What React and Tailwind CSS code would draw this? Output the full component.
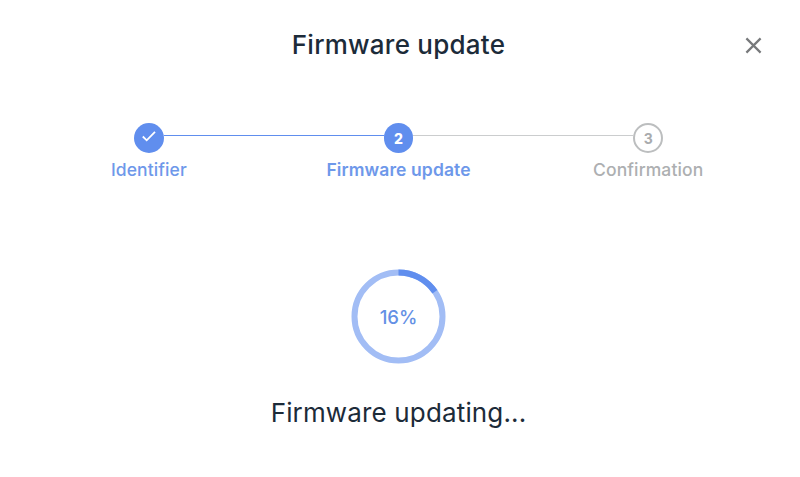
import React from "react";
import { clsx } from "clsx";

const steps = [
  { id: 1, label: "Identifier", status: "done" },
  { id: 2, label: "Firmware update", status: "active" },
  { id: 3, label: "Confirmation", status: "pending" },
];

const progress = 15.5;

function StepLine({ status }) {
  return (
    <div
      className={clsx(
        "-mt-1 h-px flex-1",
        status === "hidden" && "bg-transparent",
        status === "done" && "bg-[#608eee]",
        status === "pending" && "bg-[#cbcdce]"
      )}
    />
  );
}

function Step({ step, before, after }) {
  return (
    <li className="flex flex-1 flex-col items-center">
      <div className="flex w-full items-center">
        <StepLine status={before} />
        <div
          className={clsx(
            "flex size-[29.5px] items-center justify-center rounded-full text-[14px]",
            step.status === "pending"
              ? "border-2 border-[#bcbebf] font-bold text-[#a9abad]"
              : "bg-[#608eee] font-extrabold text-white"
          )}>
          {step.status === "done" ? (
            <svg
              width="16"
              height="14"
              viewBox="0 0 16 14"
              fill="none"
              stroke="currentColor"
              strokeWidth="1.8"
              className="-mt-1">
              <path d="M1.8 7.5L5.7 11.3L14 2.8" />
            </svg>
          ) : (
            <span className="pt-px">{step.id}</span>
          )}
        </div>
        <StepLine status={after} />
      </div>
      <p
        className={clsx(
          "mt-1 whitespace-nowrap text-[17.5px] leading-[26px] tracking-[0.1px]",
          step.status === "done" && "font-medium text-[#6e98ea]",
          step.status === "active" && "font-semibold text-[#6e98ea]",
          step.status === "pending" && "font-medium text-[#adafb1]"
        )}>
        {step.label}
      </p>
    </li>
  );
}

function ProgressRing({ value }) {
  return (
    <div className="grid size-[95px] place-items-center">
      <svg
        viewBox="0 0 95 95"
        fill="none"
        strokeWidth="6"
        className="col-start-1 row-start-1 size-[95px] -rotate-90">
        <circle cx="47.5" cy="47.5" r="44" stroke="#a2bdf5" />
        <circle
          cx="47.5"
          cy="47.5"
          r="44"
          stroke="#608eee"
          pathLength="100"
          strokeDasharray={`${value} 100`}
        />
      </svg>
      <span className="col-start-1 row-start-1 pt-0.5 text-[18.5px] font-medium text-[#6490e5]">
        {Math.round(value)}%
      </span>
    </div>
  );
}

export default function FirmwareUpdateDialog() {
  return (
    <div className="h-[477px] w-full overflow-hidden bg-white font-['Inter',sans-serif]">
      <div className="flex w-[797px] flex-col items-center">
        <header className="grid w-full grid-cols-[1fr_auto_1fr] items-center pt-7 pr-[35px] pl-[35px]">
          <h1 className="col-start-2 text-[26px] leading-[34px] font-medium tracking-[0.24px] text-[#1c2b39]">
            Firmware update
          </h1>
          <button type="button" aria-label="Close" className="justify-self-end">
            <svg
              width="17"
              height="17"
              viewBox="0 0 17 17"
              fill="none"
              stroke="#77797b"
              strokeWidth="2.2">
              <path d="M1.4 1.4L15.6 15.6M15.6 1.4L1.4 15.6" />
            </svg>
          </button>
        </header>

        <ol className="mt-[61px] flex w-full px-6">
          <Step step={steps[0]} before="hidden" after="done" />
          <Step step={steps[1]} before="done" after="pending" />
          <Step step={steps[2]} before="pending" after="hidden" />
        </ol>

        <div className="mt-[86.5px]">
          <ProgressRing value={progress} />
        </div>
        <p className="mt-[31px] text-[26px] leading-9 tracking-[0.15px] text-[#1c2b39]">
          Firmware updating...
        </p>
      </div>
    </div>
  );
}
